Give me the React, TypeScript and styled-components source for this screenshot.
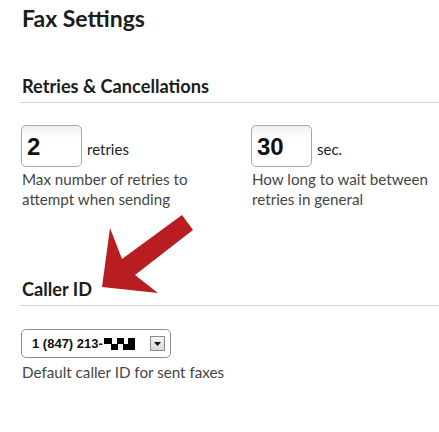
import { createGlobalStyle, styled } from "styled-components";

const GlobalStyle = createGlobalStyle`
  html, body {
    margin: 0;
    background: #fff;
  }
  body {
    font-family: Lato, "Open Sans", sans-serif;
    color: #1c1c1c;
  }
`;

type FieldProps = {
  value: string;
  unit: string;
  help: string;
};

const NumberField = ({ value, unit, help }: FieldProps) => (
  <StyledField>
    <StyledInputRow>
      <StyledNumberInput defaultValue={value} />
      <StyledUnit>{unit}</StyledUnit>
    </StyledInputRow>
    <StyledHelp $narrow>{help}</StyledHelp>
  </StyledField>
);

// blacked-out last digits of the number
const Censor = () => (
  <StyledCensor width="31" height="12" viewBox="0 0 31 12">
    <rect width="31" height="12" fill="#fff" />
    <rect x="0" y="0" width="8" height="6" fill="#000" />
    <rect x="13" y="0" width="7" height="6" fill="#000" />
    <rect x="24" y="0" width="7" height="6" fill="#000" />
    <rect x="7" y="6" width="7" height="6" fill="#000" />
    <rect x="19" y="6" width="6" height="6" fill="#000" />
    <rect x="25" y="6" width="6" height="6" fill="#000" />
  </StyledCensor>
);

const Arrow = () => (
  <StyledArrow width="439" height="432" viewBox="0 0 439 432">
    <polygon
      points="182,215 193,230 135,275 158,293 102,287 110,228 122,259"
      fill="#b81d22"
    />
  </StyledArrow>
);

const App = () => {
  return (
    <>
      <GlobalStyle />
      <StyledPage>
        <StyledTitle>Fax Settings</StyledTitle>

        <StyledSection>
          <StyledHeading>Retries &amp; Cancellations</StyledHeading>
          <StyledFields>
            <NumberField
              value="2"
              unit="retries"
              help="Max number of retries to attempt when sending"
            />
            <NumberField
              value="30"
              unit="sec."
              help="How long to wait between retries in general"
            />
          </StyledFields>
        </StyledSection>

        <StyledSection $top={68}>
          <StyledHeading>Caller ID</StyledHeading>
          <StyledCaller>
            <StyledSelect>
              <StyledSelectText>
                1 (847) 213-
                <Censor />
              </StyledSelectText>
              <StyledDropButton>
                <svg width="7" height="4" viewBox="0 0 7 4">
                  <polygon points="0,0 7,0 3.5,4" fill="#111" />
                </svg>
              </StyledDropButton>
            </StyledSelect>
            <StyledHelp $gap={4}>Default caller ID for sent faxes</StyledHelp>
          </StyledCaller>
        </StyledSection>

        <Arrow />
      </StyledPage>
    </>
  );
};

export default App;

const StyledPage = styled.div`
  position: relative;
  width: 439px;
  height: 432px;
  padding: 4px 0 0 22px;
  box-sizing: border-box;
  overflow: hidden;
`;

const StyledTitle = styled.h1`
  margin: 0;
  font-size: 23px;
  line-height: 28px;
  font-weight: 700;
`;

const StyledSection = styled.section<{ $top?: number }>`
  margin-top: ${(p) => p.$top ?? 42}px;
`;

const StyledHeading = styled.h2`
  margin: 0 0 0 -2px;
  padding: 0 0 4px 2px;
  font-size: 18.2px;
  line-height: 24px;
  font-weight: 700;
  border-bottom: 1px solid #cfcfcf;
`;

const StyledFields = styled.div`
  display: grid;
  grid-template-columns: 230px 1fr;
  padding-top: 22px;
`;

const StyledField = styled.div`
  display: flex;
  flex-direction: column;
`;

const StyledInputRow = styled.div`
  display: flex;
  align-items: baseline;
  gap: 5px;
`;

const StyledNumberInput = styled.input`
  box-sizing: border-box;
  width: 61px;
  height: 42px;
  margin: 0 0 0 -1px;
  padding: 1px 0 0 5px;
  border: 1px solid #a9a9a9;
  border-radius: 5px;
  background: linear-gradient(#efefef, #fff 30%);
  font-family: "Liberation Sans", Arial, sans-serif;
  font-size: 24px;
  font-weight: 700;
  color: #111;
  outline: none;
`;

const StyledUnit = styled.span`
  font-size: 15px;
  color: #222;
`;

const StyledHelp = styled.p<{ $narrow?: boolean; $gap?: number }>`
  margin: ${(p) => p.$gap ?? 2}px 0 0;
  font-size: 15.2px;
  line-height: 20px;
  color: #454545;
  max-width: ${(p) => (p.$narrow ? "185px" : "none")};
`;

const StyledCaller = styled.div`
  padding-top: 23px;
`;

const StyledSelect = styled.div`
  box-sizing: border-box;
  display: flex;
  align-items: center;
  justify-content: space-between;
  width: 150px;
  height: 29px;
  margin-left: -1px;
  padding: 0 5px 0 10px;
  border: 1px solid #8f8f8f;
  border-radius: 5px;
  background: #fff;
`;

const StyledSelectText = styled.span`
  display: flex;
  align-items: center;
  font-family: "Liberation Sans", Arial, sans-serif;
  font-size: 13px;
  font-weight: 700;
  color: #111;
`;

const StyledCensor = styled.svg`
  margin-left: 1px;
`;

const StyledDropButton = styled.span`
  display: flex;
  align-items: center;
  justify-content: center;
  box-sizing: border-box;
  width: 15px;
  height: 15px;
  border: 1px solid #8a8a8a;
  background: linear-gradient(#f4f4f4, #d9d9d9);
`;

const StyledArrow = styled.svg`
  position: absolute;
  left: 0;
  top: 0;
  pointer-events: none;
`;
